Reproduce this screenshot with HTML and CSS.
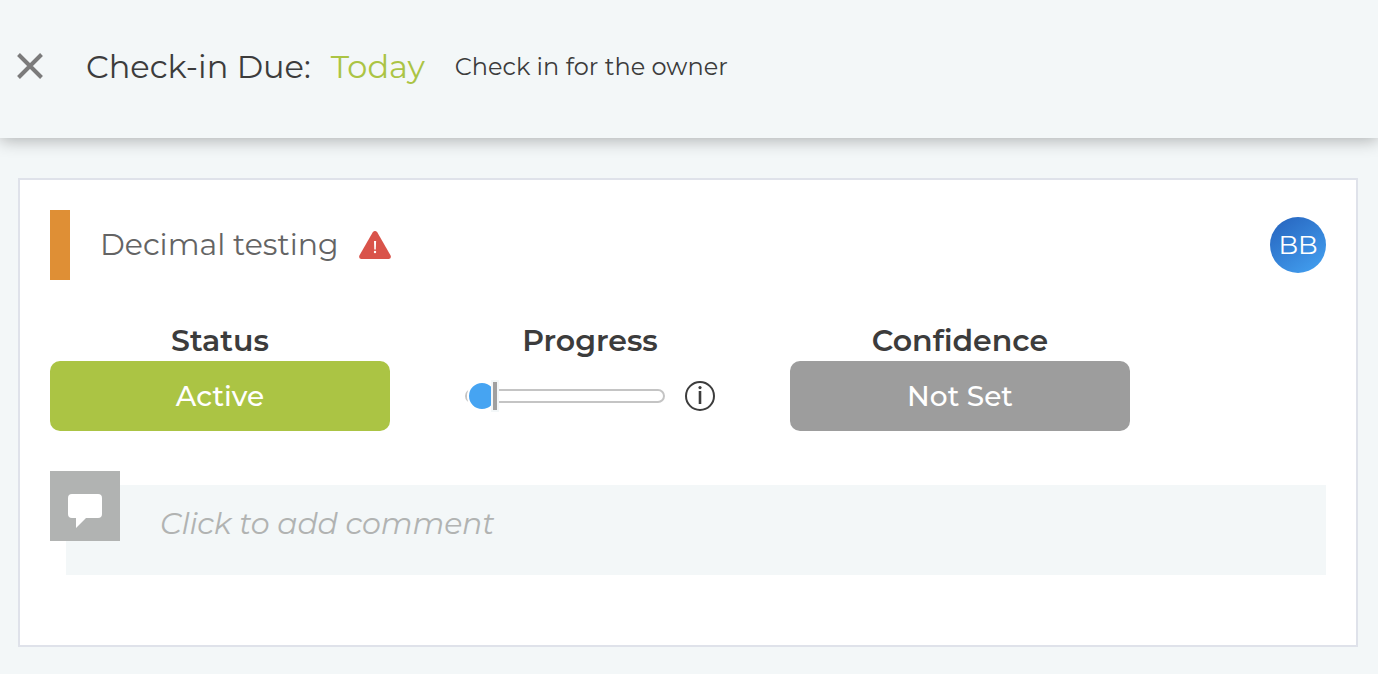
FILE: index.html
```html
<!DOCTYPE html>
<html lang="en">
<head>
    <meta charset="utf-8">
    <meta name="viewport" content="width=device-width, initial-scale=1.0">
    <link rel="stylesheet" href="styles.css">
    <title>Check-in</title>
</head>

<body>
    <header class="header">
        <svg class="close" width="26" height="26" viewBox="0 0 26 26">
            <path d="M1.5 1.5 L24.5 24.5 M24.5 1.5 L1.5 24.5"/>
        </svg>
        <h1 class="title"><span>Check-in Due:</span><span class="today">Today</span></h1>
        <span class="subtitle">Check in for the owner</span>
    </header>

    <main class="card">
        <div class="goal">
            <div class="goal-bar"></div>
            <h2 class="goal-name">Decimal testing</h2>
            <svg class="warning" width="32" height="28" viewBox="0 0 32 28">
                <path fill="#d9534a" d="M13.6 1.4 Q16 -1.4 18.4 1.4 L31.6 24.6 Q32.6 27.7 30 28 H2 Q-0.6 27.7 0.4 24.6 Z"/>
                <path fill="#fff" d="M15 10 H17.1 L16.8 18.4 H15.3 Z"/>
                <circle fill="#fff" cx="16" cy="21" r="1.2"/>
            </svg>
            <div class="avatar">BB</div>
        </div>

        <div class="fields">
            <div class="field">
                <h3 class="label">Status</h3>
                <button class="button active">Active</button>
            </div>
            <div class="field">
                <h3 class="label">Progress</h3>
                <div class="progress">
                    <div class="track">
                        <div class="thumb"></div>
                        <div class="tick"></div>
                    </div>
                    <svg width="30" height="30" viewBox="0 0 30 30">
                        <circle cx="15" cy="15" r="14" fill="none" stroke="#3c3c3c" stroke-width="2"/>
                        <circle cx="15" cy="6.6" r="1.6" fill="#3c3c3c"/>
                        <path d="M15 10 V23" stroke="#3c3c3c" stroke-width="2.6"/>
                    </svg>
                </div>
            </div>
            <div class="field">
                <h3 class="label">Confidence</h3>
                <button class="button">Not Set</button>
            </div>
        </div>

        <div class="comment">
            <div class="comment-icon">
                <svg width="34" height="34" viewBox="0 0 34 34">
                    <path fill="#fff" d="M4 0 H30 Q34 0 34 4 V20 Q34 24 30 24 H18 L8 34 V24 H4 Q0 24 0 20 V4 Q0 0 4 0 Z"/>
                </svg>
            </div>
            <div class="comment-box">Click to add comment</div>
        </div>
    </main>
</body>
</html>
```
FILE: styles.css
```css
* {
    box-sizing: border-box;
}

body {
    margin: 0px;
    background-color: #f3f7f8;
    color: #3c3c3c;
    font-family: Montserrat, Inter, sans-serif;
}

h1, h2, h3 {
    margin: 0px;
    font-weight: 400;
}

.header {
    display: flex;
    align-items: center;
    height: 138px;
    padding: 0px 17px 5px;
    box-shadow: 0px 2px 16px rgba(0, 0, 0, 0.3);
}

.close {
    margin-bottom: 1px;
    fill: none;
    stroke: #7b7b7b;
    stroke-width: 4;
}

.title {
    display: flex;
    gap: 20px;
    margin-left: 43px;
    font-size: 32px;
    white-space: nowrap;
}

.today {
    color: #abc444;
}

.subtitle {
    margin-left: 30px;
    font-size: 24px;
    letter-spacing: 0.03px;
    white-space: nowrap;
}

.card {
    height: 469px;
    margin: 40px 20px 0px 18px;
    padding: 30px;
    border: 2px solid #dfe2ea;
    background-color: white;
}

.goal {
    display: flex;
    align-items: center;
    height: 70px;
}

.goal-bar {
    width: 20px;
    height: 70px;
    background-color: #df8f35;
}

.goal-name {
    width: 239px;
    margin-left: 30px;
    padding-bottom: 2px;
    color: #646464;
    font-size: 30px;
    white-space: nowrap;
}

.warning {
    margin-left: 20px;
}

.avatar {
    width: 56px;
    height: 56px;
    margin-left: auto;
    border-radius: 50%;
    background: linear-gradient(145deg, #2765bf 5%, #43a0f0 95%);
    color: white;
    font-size: 26px;
    line-height: 56px;
    text-align: center;
}

.fields {
    display: flex;
    gap: 30px;
    margin-top: 40px;
}

.field {
    width: 340px;
}

.label {
    height: 41px;
    font-size: 30px;
    font-weight: 600;
    line-height: 41px;
    text-align: center;
}

.button {
    display: block;
    width: 340px;
    height: 70px;
    padding: 0px;
    border: 0px;
    border-radius: 10px;
    background-color: #9d9d9d;
    color: white;
    font-family: inherit;
    font-size: 28px;
    font-weight: 500;
}

.active {
    background-color: #abc444;
}

.progress {
    display: flex;
    align-items: center;
    gap: 20px;
    height: 70px;
    padding-left: 45px;
}

.track {
    position: relative;
    width: 200px;
    height: 14px;
    border: 2px solid #c4c4c4;
    border-radius: 7px;
}

/* knob sits on top of the track, tick marks the expected value */
.thumb {
    position: absolute;
    top: -10px;
    left: 0px;
    width: 30px;
    height: 30px;
    border: 2px solid white;
    border-radius: 50%;
    background-color: #46a4f2;
}

.tick {
    position: absolute;
    top: -11px;
    left: 24px;
    width: 8px;
    height: 32px;
    border: 2px solid #f3f7f8;
    background-color: #a0a0a0;
}

.comment {
    display: grid;
    grid-template-columns: 16px 54px 1fr;
    grid-template-rows: 14px 56px 34px;
    margin-top: 40px;
}

.comment-icon {
    display: flex;
    align-items: center;
    justify-content: center;
    grid-area: 1 / 1 / 3 / 3;
    z-index: 1;
    padding-top: 10px;
    background-color: #b1b3b2;
}

.comment-box {
    grid-area: 2 / 2 / 4 / 4;
    padding: 21px 94px;
    background-color: #f3f7f8;
    color: #b1b3b2;
    font-size: 30px;
    font-style: italic;
    letter-spacing: -0.13px;
    line-height: 36px;
    white-space: nowrap;
}
```
